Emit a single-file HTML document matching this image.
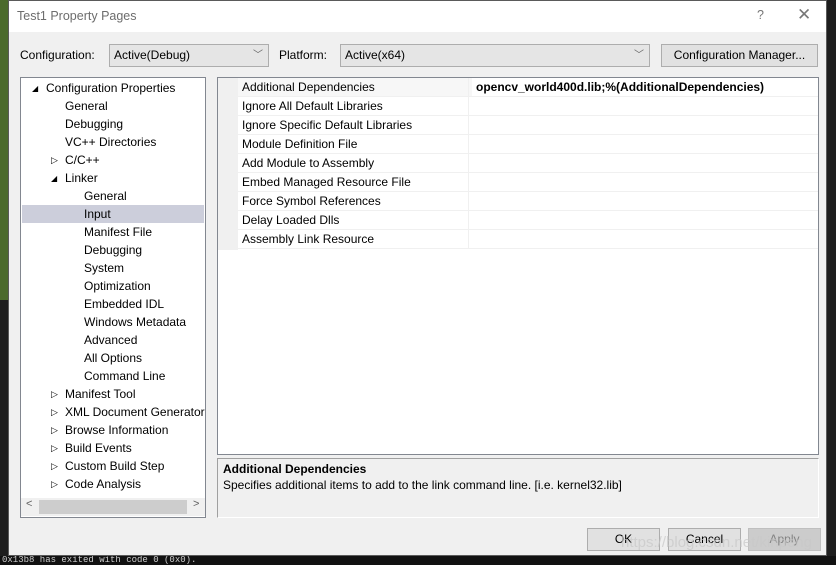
<!DOCTYPE html>
<html><head><style>
*{margin:0;padding:0;box-sizing:border-box}
body{width:836px;height:565px;background:#1e1e1e;position:relative;overflow:hidden;font-family:"Segoe UI","Liberation Sans",sans-serif;font-size:12px;color:#000}
.a{position:absolute}
.dlg{left:8px;top:0;width:819px;height:556px;background:#f0f0f0;border:1px solid #5a5a5a}
.title{left:0;top:0;width:817px;height:31px;background:#fff;color:#6d6d6d;font-size:12.5px;padding:8px 0 0 8px}
.combo{background:#e5e5e5;border:1px solid #adadad;height:23px;padding:3px 0 0 4px}
.btn{background:#e1e1e1;border:1px solid #adadad;height:23px;text-align:center;padding-top:3px}
.tree{left:11px;top:76px;width:186px;height:441px;background:#fff;border:1px solid #828790}
.ti{position:absolute;height:18px;line-height:18px;white-space:nowrap}
.grid{left:208px;top:76px;width:602px;height:378px;background:#fff;border:1px solid #828790}
.row{position:absolute;left:20px;width:580px;height:19px;border-bottom:1px solid #f0f0f0;line-height:18px}
.row span{position:absolute;left:4px}
.row i{position:absolute;left:230px;top:0;width:1px;height:19px;background:#f0f0f0}
.desc{left:208px;top:457px;width:602px;height:60px;border:1px solid #a0a0a0;border-right-color:#fff;border-bottom-color:#fff;padding:3px 5px}
</style></head><body>
<div class="a" style="left:0;top:0;width:8px;height:300px;background:#4b6a2c"></div>
<div class="a" style="left:0;top:556px;width:836px;height:9px;background:#111;color:#ccc;font:9px 'Liberation Mono',monospace;line-height:9px;padding-left:2px">0x13b8 has exited with code 0 (0x0).</div>
<div class="a dlg">
 <div class="a title">Test1 Property Pages<span class="a" style="left:748px;top:7px;color:#777">?</span><span class="a" style="left:788px;top:4px;font-size:17px;color:#777">✕</span></div>
 <div class="a" style="left:11px;top:47px">Configuration:</div>
 <div class="a combo" style="left:100px;top:43px;width:160px">Active(Debug)<span class="a" style="right:5px;top:1px;color:#666;font-size:10px">﹀</span></div>
 <div class="a" style="left:270px;top:47px">Platform:</div>
 <div class="a combo" style="left:331px;top:43px;width:310px">Active(x64)<span class="a" style="right:5px;top:1px;color:#666;font-size:10px">﹀</span></div>
 <div class="a btn" style="left:652px;top:43px;width:157px">Configuration Manager...</div>
 <div class="a tree">
  <div class="ti" style="left:1px;top:127px;width:182px;background:#cccedb"></div>
  <div class="ti" style="left:11px;top:2px;font-size:8px">◢</div><div class="ti" style="left:25px;top:1px">Configuration Properties</div>
  <div class="ti" style="left:44px;top:19px">General</div>
  <div class="ti" style="left:44px;top:37px">Debugging</div>
  <div class="ti" style="left:44px;top:55px">VC++ Directories</div>
  <div class="ti" style="left:30px;top:73px;font-size:9px">▷</div><div class="ti" style="left:44px;top:73px">C/C++</div>
  <div class="ti" style="left:30px;top:92px;font-size:8px">◢</div><div class="ti" style="left:44px;top:91px">Linker</div>
  <div class="ti" style="left:63px;top:109px">General</div>
  <div class="ti" style="left:63px;top:127px">Input</div>
  <div class="ti" style="left:63px;top:145px">Manifest File</div>
  <div class="ti" style="left:63px;top:163px">Debugging</div>
  <div class="ti" style="left:63px;top:181px">System</div>
  <div class="ti" style="left:63px;top:199px">Optimization</div>
  <div class="ti" style="left:63px;top:217px">Embedded IDL</div>
  <div class="ti" style="left:63px;top:235px">Windows Metadata</div>
  <div class="ti" style="left:63px;top:253px">Advanced</div>
  <div class="ti" style="left:63px;top:271px">All Options</div>
  <div class="ti" style="left:63px;top:289px">Command Line</div>
  <div class="ti" style="left:30px;top:307px;font-size:9px">▷</div><div class="ti" style="left:44px;top:307px">Manifest Tool</div>
  <div class="ti" style="left:30px;top:325px;font-size:9px">▷</div><div class="ti" style="left:44px;top:325px">XML Document Generator</div>
  <div class="ti" style="left:30px;top:343px;font-size:9px">▷</div><div class="ti" style="left:44px;top:343px">Browse Information</div>
  <div class="ti" style="left:30px;top:361px;font-size:9px">▷</div><div class="ti" style="left:44px;top:361px">Build Events</div>
  <div class="ti" style="left:30px;top:379px;font-size:9px">▷</div><div class="ti" style="left:44px;top:379px">Custom Build Step</div>
  <div class="ti" style="left:30px;top:397px;font-size:9px">▷</div><div class="ti" style="left:44px;top:397px">Code Analysis</div>
  <div class="a" style="left:0;top:420px;width:184px;height:18px;background:#f0f0f0"></div>
  <div class="a" style="left:18px;top:422px;width:148px;height:14px;background:#cdcdcd"></div>
  <div class="a" style="left:5px;top:420px;color:#606060;font-size:11px">&lt;</div>
  <div class="a" style="left:172px;top:420px;color:#606060;font-size:11px">&gt;</div>
 </div>
 <div class="a grid">
  <div class="a" style="left:0;top:0;width:20px;height:172px;background:#f0f0f0"></div>
  <div class="row" style="top:0;background:#f7f7f7"><span>Additional Dependencies</span><i></i><b style="position:absolute;left:234px;background:#fff;width:346px;padding-left:4px;height:18px">opencv_world400d.lib;%(AdditionalDependencies)</b></div>
  <div class="row" style="top:19px"><span>Ignore All Default Libraries</span><i></i></div>
  <div class="row" style="top:38px"><span>Ignore Specific Default Libraries</span><i></i></div>
  <div class="row" style="top:57px"><span>Module Definition File</span><i></i></div>
  <div class="row" style="top:76px"><span>Add Module to Assembly</span><i></i></div>
  <div class="row" style="top:95px"><span>Embed Managed Resource File</span><i></i></div>
  <div class="row" style="top:114px"><span>Force Symbol References</span><i></i></div>
  <div class="row" style="top:133px"><span>Delay Loaded Dlls</span><i></i></div>
  <div class="row" style="top:152px"><span>Assembly Link Resource</span><i></i></div>
 </div>
 <div class="a desc"><b>Additional Dependencies</b><br><div style="margin-top:2px">Specifies additional items to add to the link command line. [i.e. kernel32.lib]</div></div>
 <div class="a btn" style="left:578px;top:527px;width:73px">OK</div>
 <div class="a btn" style="left:659px;top:527px;width:73px">Cancel</div>
 <div class="a btn" style="left:739px;top:527px;width:73px;background:#ccc;border-color:#bfbfbf;color:#838383">Apply</div>
 <div class="a" style="left:612px;top:533px;color:rgba(200,200,200,.7);font-size:15px;font-family:'Liberation Sans',sans-serif">https://blog.csdn.net/kinpeng</div>
</div>
</body></html>
